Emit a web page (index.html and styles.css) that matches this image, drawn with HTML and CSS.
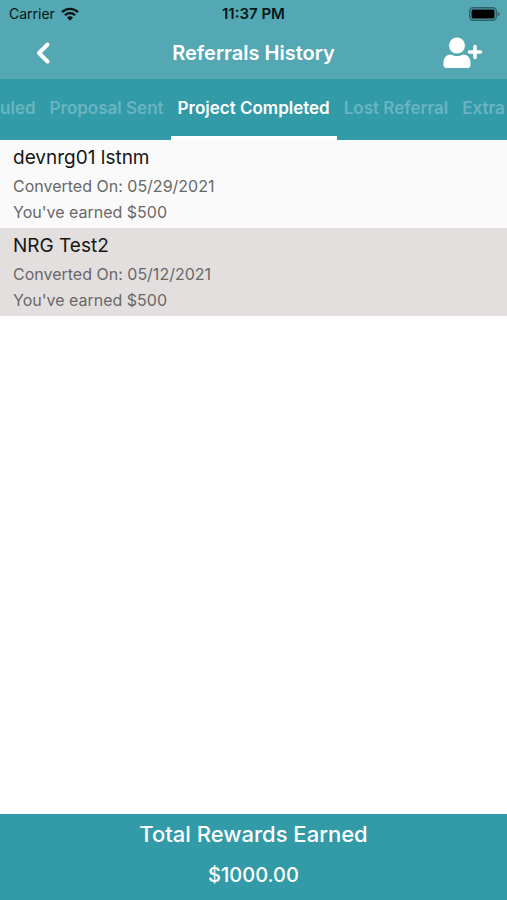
FILE: index.html
```
<!DOCTYPE html>
<html lang="en">
<head>
    <meta charset="UTF-8">
    <meta name="viewport" content="width=device-width, initial-scale=1">
    <title>Referrals History</title>
    <link rel="stylesheet" href="styles.css">
</head>
<body>
<header class="header">
    <div class="status">
        <div class="carrier">
            <span>Carrier</span>
            <svg class="wifi" viewBox="0 0 18 14" aria-hidden="true">
                <path d="M1 5.2a11.5 11.5 0 0 1 16 0M3.900 8.200a7.300 7.300 0 0 1 10.200 0" fill="none" stroke="#061518" stroke-width="2.300"/>
                <path d="M6 10.600a4.300 4.300 0 0 1 6 0L9 13.700z" fill="#061518"/>
            </svg>
        </div>
        <time class="clock">11:37 PM</time>
        <svg class="battery" viewBox="0 0 31 14" aria-hidden="true">
            <rect x="0.700" y="0.700" width="26.600" height="12.600" rx="3.500" fill="none" stroke="#2f6268" stroke-width="1.400"/>
            <rect x="2.500" y="2.500" width="23" height="9" rx="1.500" fill="#000"/>
            <path d="M28.700 4.500q2 1 2 2.500t-2 2.500z" fill="#2f6268"/>
        </svg>
    </div>
    <div class="navbar">
        <button class="icon-btn back" type="button" aria-label="Back">
            <svg width="14" height="22" viewBox="0 0 14 22"><path d="M11.500 2.500L3 11l8.500 8.500" fill="none" stroke="#fff" stroke-width="4" stroke-linecap="round" stroke-linejoin="round"/></svg>
        </button>
        <h1 class="title">Referrals History</h1>
        <button class="icon-btn add" type="button" aria-label="Add referral">
            <svg width="40" height="32" viewBox="0 0 40 32" fill="#fff">
                <circle cx="14" cy="8.500" r="8"/>
                <path d="M8.200 17.500c3.600 2 8 2 11.600 0 4.700 0 7.700 3.300 7.700 8V28a3 3 0 0 1-3 3h-21a3 3 0 0 1-3-3v-2.500c0-4.700 3-8 7.700-8z"/>
                <path d="M32 9.500v11M26.500 15h11" fill="none" stroke="#fff" stroke-width="3.600" stroke-linecap="round"/>
            </svg>
        </button>
    </div>
</header>

<nav class="tabs">
    <a class="tab" href="#">Scheduled</a>
    <a class="tab" href="#">Proposal Sent</a>
    <a class="tab active" href="#" aria-current="page">Project Completed</a>
    <a class="tab" href="#">Lost Referral</a>
    <a class="tab" href="#">Extra</a>
</nav>

<main class="list">
    <article class="item">
        <h2 class="name">devnrg01 lstnm</h2>
        <p class="line">Converted On: 05/29/2021</p>
        <p class="line">You've earned $500</p>
    </article>
    <article class="item">
        <h2 class="name">NRG Test2</h2>
        <p class="line">Converted On: 05/12/2021</p>
        <p class="line">You've earned $500</p>
    </article>
</main>

<footer class="total">
    <p class="total-label">Total Rewards Earned</p>
    <p>$1000.00</p>
</footer>

<script>
    // keep the active tab in the middle of the strip
    window.onload=function(){
        var tabs=document.querySelector(".tabs");
        var active=document.querySelector(".tab.active");
        center();
        window.onresize=center;
        function center(){
            tabs.scrollLeft=Math.floor(active.offsetLeft+active.offsetWidth/2-tabs.clientWidth/2);
        }
    }
</script>
</body>
</html>
```

FILE: styles.css
```
*{
    box-sizing: border-box;
    margin: 0;
    padding: 0;
}
body{
    display: flex;
    flex-direction: column;
    min-height: 100vh;
    background: #fff;
    font-family: Inter, "Liberation Sans", sans-serif;
}
.header{
    background: #53a8b3;
}
.status{
    display: grid;
    grid-template-columns: 1fr auto 1fr;
    align-items: center;
    height: 27px;
    padding: 0 7px;
    color: #061518;
    font-size: 14px;
}
.carrier{
    display: flex;
    align-items: center;
    gap: 6px;
    padding-left: 2px;
}
.wifi{
    width: 18px;
    height: 14px;
}
.clock{
    font-size: 15px;
    font-weight: 600;
}
.battery{
    justify-self: end;
    width: 31px;
    height: 14px;
}
.navbar{
    display: grid;
    grid-template-columns: 1fr auto 1fr;
    align-items: center;
    height: 52px;
    padding: 0 24px;
}
.icon-btn{
    display: flex;
    border: 0;
    background: none;
    cursor: pointer;
}
.back{
    padding: 0 12px;
}
.add{
    justify-self: end;
}
.title{
    color: #fff;
    font-size: 20px;
    font-weight: 600;
}
.tabs{
    position: relative;
    display: flex;
    height: 61px;
    padding-right: 24px;
    overflow-x: auto;
    scrollbar-width: none;
    background: #339aa8;
}
.tab{
    flex: none;
    padding: 0 7px;
    border-bottom: 4px solid transparent;
    color: #68b5c0;
    font-size: 17px;
    font-weight: 600;
    line-height: 58px;
    text-decoration: none;
    white-space: nowrap;
}
.tab.active{
    border-bottom-color: #fff;
    color: #fff;
}
.list{
    flex: 1;
}
.item{
    padding: 3px 13px;
    background: #fafafa;
}
.item:nth-child(even){
    background: #e4dfdf;
}
.name{
    color: #161616;
    font-size: 19px;
    font-weight: 400;
    line-height: 30px;
}
.line{
    color: #686868;
    font-size: 16px;
    line-height: 26px;
}
.total{
    padding: 0 16px 4px;
    background: #339aa8;
    color: #fff;
    font-size: 20px;
    font-weight: 500;
    line-height: 41px;
    text-align: center;
}
.total-label{
    font-size: 22px;
}
```
